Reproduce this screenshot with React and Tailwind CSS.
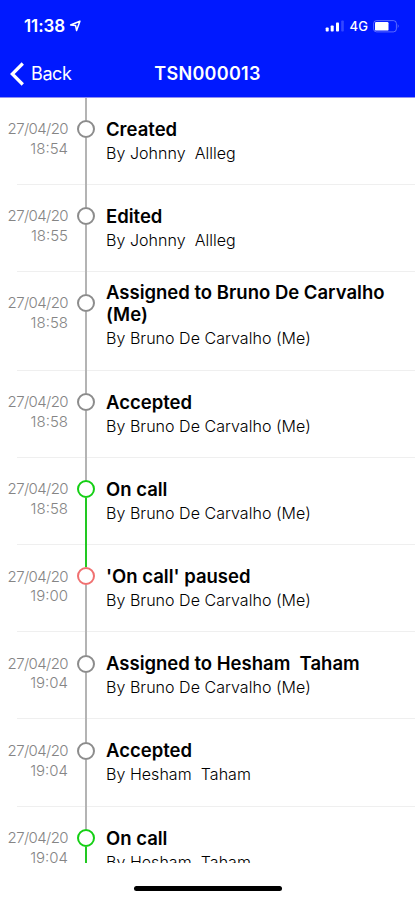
const tones = {
    gray: { ring: "border-[#8c8c8c]", line: "bg-[#b4b4b4] w-[2px]" },
    green: { ring: "border-[#14cf14]", line: "bg-[#22c822] w-[2px]" },
    red: { ring: "border-[#f07070]", line: "bg-[#b4b4b4] w-[2px]" },
};

const events = [
    { date: "27/04/20", time: "18:54", title: "Created", by: "Johnny  Allleg", before: "gray", tone: "gray" },
    { date: "27/04/20", time: "18:55", title: "Edited", by: "Johnny  Allleg", before: "gray", tone: "gray" },
    { date: "27/04/20", time: "18:58", title: "Assigned to Bruno De Carvalho\n(Me)", by: "Bruno De Carvalho (Me)", before: "gray", tone: "gray", tall: true },
    { date: "27/04/20", time: "18:58", title: "Accepted", by: "Bruno De Carvalho (Me)", before: "gray", tone: "gray" },
    { date: "27/04/20", time: "18:58", title: "On call", by: "Bruno De Carvalho (Me)", before: "gray", tone: "green" },
    { date: "27/04/20", time: "19:00", title: "'On call' paused", by: "Bruno De Carvalho (Me)", before: "green", tone: "red" },
    { date: "27/04/20", time: "19:04", title: "Assigned to Hesham  Taham", by: "Bruno De Carvalho (Me)", before: "gray", tone: "gray" },
    { date: "27/04/20", time: "19:04", title: "Accepted", by: "Hesham  Taham", before: "gray", tone: "gray" },
    { date: "27/04/20", time: "19:04", title: "On call", by: "Hesham  Taham", before: "gray", tone: "green" },
];

const StatusBar = () => (
    <div className="flex h-[52px] items-center justify-between pl-[24px] pr-[15px]">
        <div className="flex items-center gap-[4px]">
            <span className="text-[17px] leading-5 font-semibold tracking-[-0.1px]">11:38</span>
            <svg width="12" height="12" viewBox="0 0 12 12" fill="none" stroke="currentColor" strokeWidth="1.5" strokeLinejoin="round">
                <path d="M10.9 1.2 L1.6 5 L6.6 5.6 L7.6 10.6 Z" />
            </svg>
        </div>
        <div className="flex items-center">
            <svg width="20" height="12" viewBox="0 0 20 12" fill="currentColor">
                <rect x="0.7" y="7.5" width="3" height="4" rx="0.8" />
                <rect x="5.7" y="5.5" width="3" height="6" rx="0.8" />
                <rect x="11" y="2.5" width="3" height="9" rx="0.8" />
                <rect x="16.2" y="0.5" width="2.6" height="11" rx="0.8" opacity="0.2" />
            </svg>
            <span className="ml-[5px] text-[13px] leading-4 font-medium tracking-[0.1px]">4G</span>
            <svg className="ml-[5px]" width="27" height="13" viewBox="0 0 27 13" fill="none">
                <rect x="0.6" y="0.6" width="22.8" height="11.3" rx="3" stroke="white" strokeOpacity="0.35" />
                <rect x="2" y="2" width="13.5" height="8.6" rx="1.2" fill="white" />
                <path d="M24.8 4 Q26.6 6.3 24.8 8.6 Z" fill="white" fillOpacity="0.5" />
            </svg>
        </div>
    </div>
);

const NavBar = () => (
    <div className="grid h-[44px] grid-cols-[1fr_auto_1fr] items-center">
        <button className="flex items-center gap-[7px] pl-[10px] text-left">
            <svg width="14" height="24" viewBox="0 0 14 24" fill="none" stroke="currentColor" strokeWidth="3.2">
                <path d="M12.8 1.5 L2.3 12 L12.8 22.5" />
            </svg>
            <span className="text-[18px] leading-6 tracking-[-0.4px]">Back</span>
        </button>
        <h1 className="text-[18px] leading-6 font-semibold tracking-[0.3px]">TSN000013</h1>
    </div>
);

const EventRow = ({ event }) => {
    const { ring, line } = tones[event.tone];

    return (
        <li className={`relative flex shrink-0 ${event.tall ? "h-[98.8px]" : "h-[87.2px]"}`}>
            <div className="absolute right-0 bottom-0 left-[17px] h-px bg-[#efefef]" />

            <div className="w-[68px] pt-[21.5px] text-right text-[15px] leading-[19.7px] font-light text-[#858585]">
                <div className="tracking-[-0.6px]">{event.date}</div>
                <div>{event.time}</div>
            </div>

            <div className="relative ml-[8.7px] flex w-[18px] flex-col items-center">
                <div className={`h-[22.3px] ${tones[event.before].line}`} />
                <div className={`size-[18px] rounded-full border-2 ${ring}`} />
                <div className={`flex-1 ${line}`} />
            </div>

            <div className={`ml-[11.3px] whitespace-pre text-black ${event.tall ? "pt-[9px]" : "pt-[20px]"}`}>
                <h2 className="text-[18.5px] leading-[22.5px] font-semibold">{event.title}</h2>
                <p className="mt-[2.5px] text-[16px] leading-[20px] font-light tracking-[0.04px]">By {event.by}</p>
            </div>
        </li>
    );
};

export default function App() {
    return (
        <div className="flex h-[900px] w-[415px] flex-col overflow-hidden bg-white font-['Inter',sans-serif]">
            <header className="h-[97.5px] shrink-0 border-b border-[#8f8ff0] bg-[#0019ff] text-white">
                <StatusBar />
                <NavBar />
            </header>

            <ul className="flex h-[765.5px] shrink-0 flex-col overflow-hidden">
                {events.map((event, i) => (
                    <EventRow key={i} event={event} />
                ))}
            </ul>

            <div className="flex flex-1 justify-center pt-[23px]">
                <div className="h-[5px] w-[148px] rounded-full bg-black" />
            </div>
        </div>
    );
}
